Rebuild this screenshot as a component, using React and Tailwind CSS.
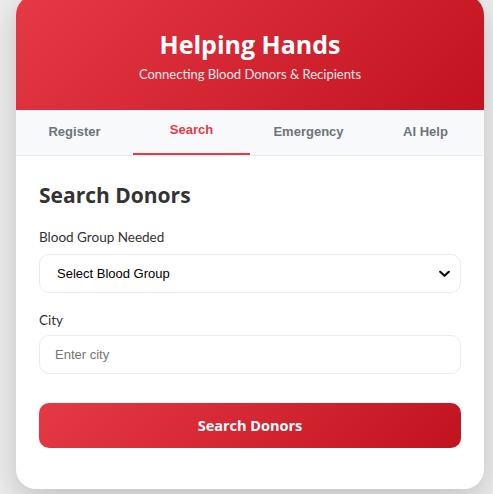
import React from "react";

function Chevron() {
  return (
    <svg width="11" height="7" viewBox="0 0 11 7" className="absolute right-[11px] top-1/2 -translate-y-1/2 pointer-events-none">
      <path d="M1.2 1.2 L5.5 5.3 L9.8 1.2" fill="none" stroke="#111" strokeWidth="2.2" strokeLinecap="round" strokeLinejoin="round" />
    </svg>
  );
}

export default function App() {
  const tabs = ["Register", "Search", "Emergency", "AI Help"];
  return (
    <div className="min-h-screen bg-[#ececec] pl-4 overflow-hidden font-['Lato','Open_Sans',sans-serif]">
      <div className="w-[468px] -mt-[5px] rounded-[20px] bg-white shadow-[0_10px_30px_rgba(0,0,0,0.18)] overflow-hidden">
        <div className="h-[115px] bg-[linear-gradient(135deg,#e63946,#c1121f)] text-white text-center pt-[33px]">
          <h1 className="font-['Open_Sans',sans-serif] text-[25px] leading-[32px] font-bold">Helping Hands</h1>
          <p className="text-[13px] leading-[18px] mt-[5px] opacity-90">Connecting Blood Donors &amp; Recipients</p>
        </div>
        <div className="grid grid-cols-4 bg-[#f8f9fa] border-b border-[#e9ecef]">
          {tabs.map((t) => (
            <button
              key={t}
              className={
                "h-[45px] border-b-2 font-['Liberation_Sans',Arial,sans-serif] text-[13px] font-bold " +
                (t === "Search" ? "border-[#e63946] text-[#e63946] pb-[3px]" : "border-transparent text-[#6c757d]")
              }
            >
              {t}
            </button>
          ))}
        </div>
        <div className="px-[23px] pt-[24px] pb-[41px]">
          <h2 className="font-['Open_Sans',sans-serif] text-[21px] leading-[30px] font-bold text-[#333]">Search Donors</h2>
          <div className="mt-[17px]">
            <label className="block text-[13.5px] leading-[20px] text-[#333] mb-[7px]">Blood Group Needed</label>
            <div className="relative">
              <select className="w-full h-[39px] appearance-none rounded-[10px] border border-[#e9ecef] bg-white pl-[17px] font-['Liberation_Sans',Arial,sans-serif] text-[13px] text-black outline-none">
                <option>Select Blood Group</option>
                <option>A+</option>
                <option>A-</option>
                <option>B+</option>
                <option>B-</option>
                <option>AB+</option>
                <option>AB-</option>
                <option>O+</option>
                <option>O-</option>
              </select>
              <Chevron />
            </div>
          </div>
          <div className="mt-[17px]">
            <label className="block text-[13.5px] leading-[20px] text-[#333] mb-[5px]">City</label>
            <input
              placeholder="Enter city"
              className="w-full h-[39px] rounded-[10px] border border-[#e9ecef] bg-white px-[15px] font-['Liberation_Sans',Arial,sans-serif] text-[13px] text-black placeholder:text-[#757575] outline-none"
            />
          </div>
          <button className="mt-[29px] w-full h-[45px] rounded-[10px] bg-[linear-gradient(135deg,#e63946,#c1121f)] font-['Open_Sans',sans-serif] text-white text-[14.5px] font-bold">
            Search Donors
          </button>
        </div>
      </div>
    </div>
  );
}
